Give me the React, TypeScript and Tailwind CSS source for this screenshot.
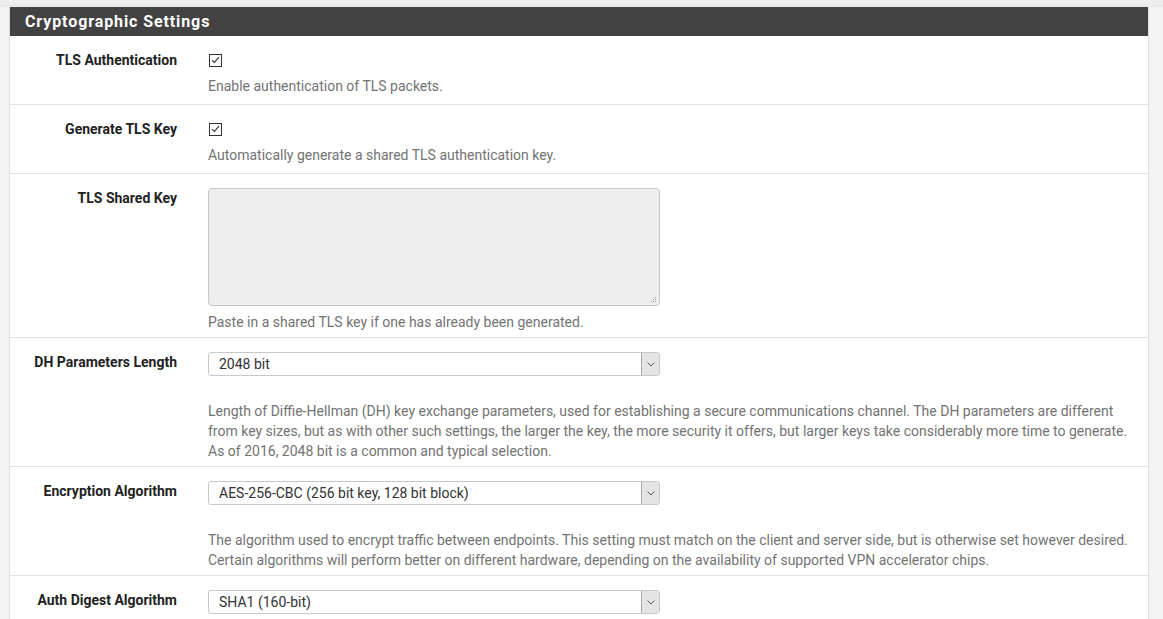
import React from "react";

const font = { fontFamily: "Roboto, 'Liberation Sans', sans-serif" };

function Check() {
  return (
    <span className="flex h-[13px] w-[13px] items-center justify-center border border-[#333] bg-white">
      <svg width="9" height="8" viewBox="0 0 9 8" fill="none">
        <path d="M1 4.2 L3.4 6.4 L8 1.2" stroke="#333" strokeWidth="1.1" />
      </svg>
    </span>
  );
}

function Select({ value }: { value: string }) {
  return (
    <div className="flex h-[24px] w-[452px] overflow-hidden rounded-[3px] border border-[#c8c8c8] bg-white">
      <div className="flex-1 pl-[10px] text-[14px] leading-[22px] text-[#333]">{value}</div>
      <div className="flex w-[18px] items-center justify-center border-l border-[#aaa] bg-[#e4e4e4]">
        <svg width="8" height="5" viewBox="0 0 8 5" fill="none">
          <path d="M0.5 0.5 L4 4 L7.5 0.5" stroke="#555" strokeWidth="1" />
        </svg>
      </div>
    </div>
  );
}

function Row({
  label,
  children,
  help,
  helpGap = "mt-[25px]",
  pb = "pb-[5px]",
}: {
  label: string;
  children: React.ReactNode;
  help: React.ReactNode;
  helpGap?: string;
  pb?: string;
}) {
  return (
    <div className={`flex border-b border-[#e1e1e1] pt-[12px] ${pb}`}>
      <div className="w-[167px] shrink-0 text-right text-[14px] font-bold leading-[24px] text-[#222]">{label}</div>
      <div className="ml-[31px] flex-1 pr-[15px] pt-[2px]">
        {children}
        <div className={`${helpGap} text-[14px] leading-[20px] text-[#737373]`}>{help}</div>
      </div>
    </div>
  );
}

export default function App() {
  return (
    <div className="h-[619px] overflow-hidden bg-[#f3f3f3]" style={font}>
      <div className="h-[7px] bg-gradient-to-b from-[#f0f0f0] to-[#e8e8e8]" />
      <div className="ml-[9px] w-[1140px] border-x border-[#dcdcdc] bg-white">
        <div className="flex h-[29px] items-center bg-[#424242] pl-[15px] pt-[1px] text-[16px] font-bold tracking-[0.9px] text-white">
          Cryptographic Settings
        </div>

        <Row label="TLS Authentication" help="Enable authentication of TLS packets." helpGap="mt-[6px]" pb="pb-[8px]">
          <div className="flex h-[20px] items-center pl-[1px]">
            <Check />
          </div>
        </Row>

        <Row label="Generate TLS Key" help="Automatically generate a shared TLS authentication key." helpGap="mt-[6px]" pb="pb-[8px]">
          <div className="flex h-[20px] items-center pl-[1px]">
            <Check />
          </div>
        </Row>

        <Row label="TLS Shared Key" help="Paste in a shared TLS key if one has already been generated." helpGap="mt-[6px]">
          <div className="relative h-[118px] w-[452px] rounded-[4px] border border-[#c8c8c8] bg-[#eeeeee]">
            <svg className="absolute bottom-[2px] right-[2px]" width="7" height="7" viewBox="0 0 7 7">
              <rect x="5" y="1" width="1" height="1" fill="#999" />
              <rect x="3" y="3" width="1" height="1" fill="#999" />
              <rect x="5" y="3" width="1" height="1" fill="#999" />
              <rect x="1" y="5" width="1" height="1" fill="#999" />
              <rect x="3" y="5" width="1" height="1" fill="#999" />
              <rect x="5" y="5" width="1" height="1" fill="#999" />
            </svg>
          </div>
        </Row>

        <Row
          label="DH Parameters Length"
          help={
            <>
              Length of Diffie-Hellman (DH) key exchange parameters, used for establishing a secure communications channel. The DH parameters are different
              <br />
              from key sizes, but as with other such settings, the larger the key, the more security it offers, but larger keys take considerably more time to generate.
              <br />
              As of 2016, 2048 bit is a common and typical selection.
            </>
          }
        >
          <Select value="2048 bit" />
        </Row>

        <Row
          label="Encryption Algorithm"
          help={
            <>
              The algorithm used to encrypt traffic between endpoints. This setting must match on the client and server side, but is otherwise set however desired.
              <br />
              Certain algorithms will perform better on different hardware, depending on the availability of supported VPN accelerator chips.
            </>
          }
        >
          <Select value="AES-256-CBC (256 bit key, 128 bit block)" />
        </Row>

        <Row label="Auth Digest Algorithm" help="">
          <Select value="SHA1 (160-bit)" />
        </Row>
      </div>
    </div>
  );
}
